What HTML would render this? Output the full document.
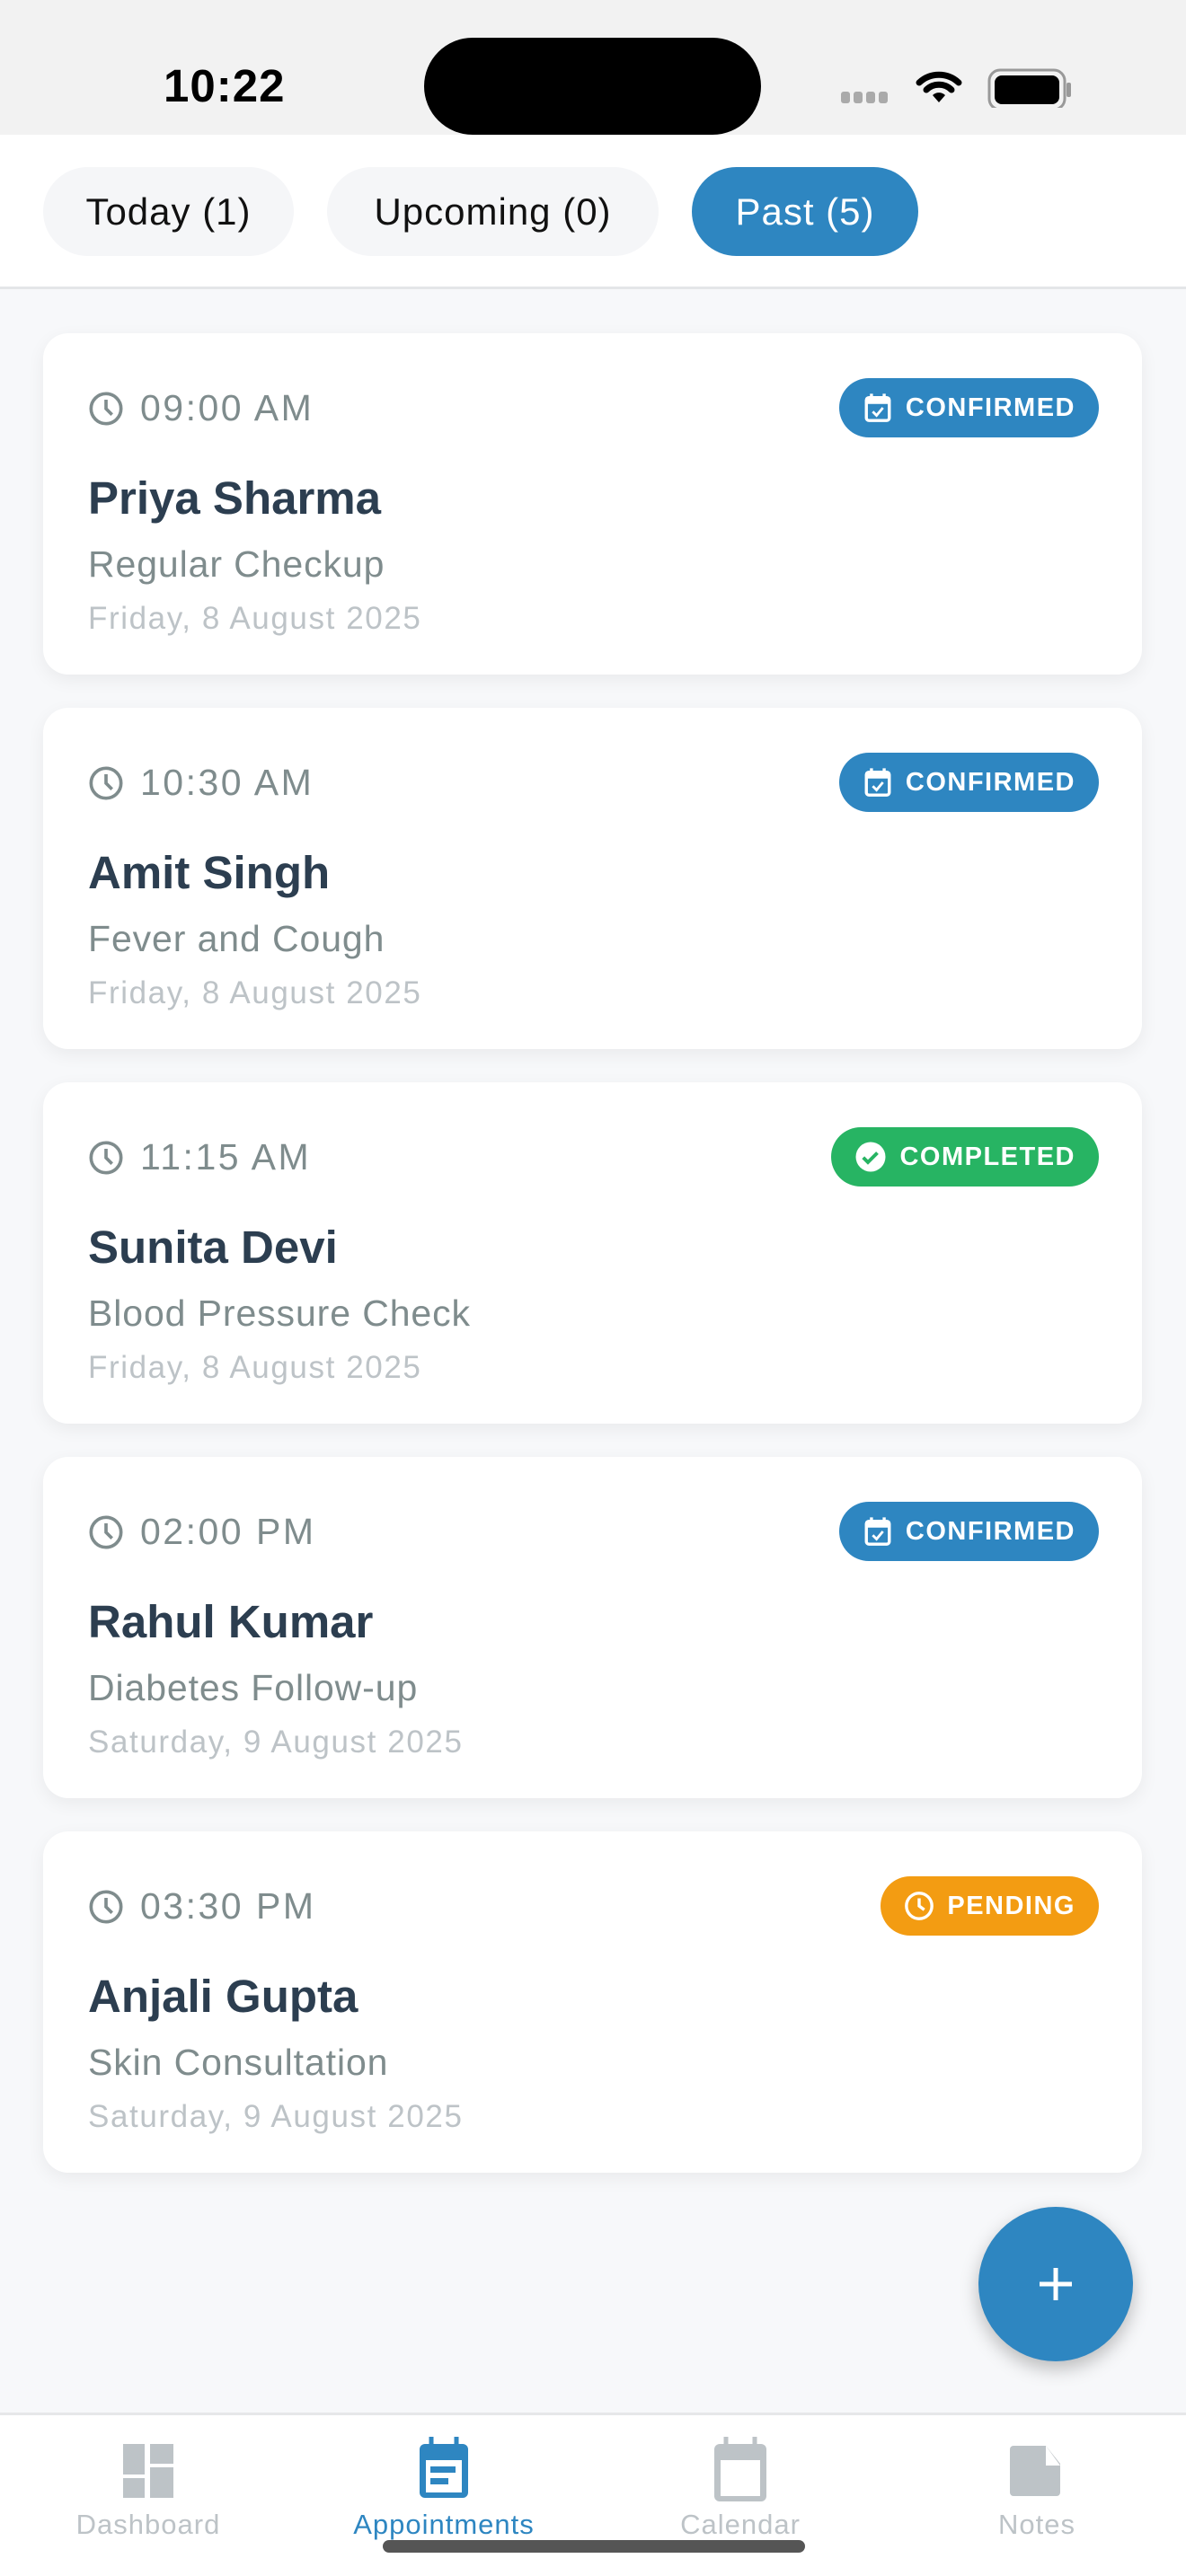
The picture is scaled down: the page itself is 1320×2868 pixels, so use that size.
<!DOCTYPE html>
<html><head><meta charset="utf-8"><style>
*{margin:0;padding:0;box-sizing:border-box}
body{width:1320px;height:2868px;background:#f7f8fa;font-family:"Liberation Sans",sans-serif;position:relative;overflow:hidden}
.sb{position:absolute;left:0;top:0;width:1320px;height:150px;background:#f2f2f2}
.time{position:absolute;left:182px;top:66px;font-size:51px;font-weight:700;color:#000;letter-spacing:1px}
.island{position:absolute;left:472px;top:42px;width:375px;height:108px;background:#000;border-radius:54px}
.tabs{position:absolute;left:0;top:150px;width:1320px;height:172px;background:#fff;border-bottom:3px solid #e4e6e8}
.tab{position:absolute;top:36px;height:99px;border-radius:50px;background:#f5f6f8;font-size:42px;letter-spacing:1px;color:#111;display:flex;align-items:center;justify-content:center}
.card{position:absolute;left:48px;width:1223px;height:380px;background:#fff;border-radius:28px;box-shadow:0 6px 20px rgba(0,0,0,.06)}
.tm{position:absolute;left:50px;top:60px;font-size:41px;letter-spacing:2.5px;color:#7f8c8d;display:flex;align-items:center}
.tm svg{margin-right:18px}
.badge{position:absolute;right:48px;top:50px;height:66px;border-radius:33px;color:#fff;font-weight:700;font-size:29px;letter-spacing:1.5px;display:flex;align-items:center;padding:0 26px 0 26px}
.badge svg{margin-right:14px}
.nm{position:absolute;left:50px;top:154px;font-size:51px;font-weight:700;color:#2c3e50}
.rs{position:absolute;left:50px;top:234px;font-size:41px;letter-spacing:0.9px;color:#7f8c8d}
.dt{position:absolute;left:50px;top:298px;font-size:35px;letter-spacing:1.6px;color:#bdc3c7}
.fab{position:absolute;left:1089px;top:2457px;width:172px;height:172px;border-radius:50%;background:#2e86c1;box-shadow:0 8px 20px rgba(0,0,0,.25)}
.nav{position:absolute;left:0;top:2686px;width:1320px;height:182px;background:#fff;border-top:3px solid #e6e7e9}
.ni{position:absolute;top:0;width:300px;text-align:center}
.ni span{position:absolute;left:0;right:0;top:104px;font-size:31px;letter-spacing:1px;color:#bdc3c7}
</style></head><body>
<div class="sb"><div class="time">10:22</div><div class="island"></div>
<svg style="position:absolute;left:935px;top:60px" width="330" height="60">
<g fill="#aaa"><rect x="1" y="42" width="10" height="13" rx="3"/><rect x="15" y="42" width="10" height="13" rx="3"/><rect x="29" y="42" width="10" height="13" rx="3"/><rect x="43" y="42" width="10" height="13" rx="3"/></g>
<path d="M88 32a32 32 0 0 1 44 0M96 40a20 20 0 0 1 28 0" stroke="#000" stroke-width="7" fill="none" stroke-linecap="round"/><path d="M103 46l7 8 7-8a10 10 0 0 0-14 0z" fill="#000"/>
<rect x="166" y="18" width="84" height="44" rx="12" fill="none" stroke="#999" stroke-width="3"/><rect x="172" y="24" width="72" height="32" rx="8" fill="#000"/><rect x="252" y="32" width="5" height="16" rx="2" fill="#999"/></svg>
</div>
<div class="tabs">
<div class="tab" style="left:48px;width:279px">Today (1)</div>
<div class="tab" style="left:364px;width:369px">Upcoming (0)</div>
<div class="tab" style="left:770px;width:252px;background:#2e86c1;color:#fff">Past (5)</div>
</div>

<div class="card" style="top:371px"><div class="tm"><svg width="40" height="40" viewBox="0 0 24 24"><circle cx="12" cy="12" r="10" fill="none" stroke="#7f8c8d" stroke-width="2.2"/><path d="M12 6v6l4 4" fill="none" stroke="#7f8c8d" stroke-width="2.2"/></svg>09:00 AM</div>
<div class="badge" style="background:#2e86c1"><svg width="34" height="34" viewBox="0 0 24 24"><path d="M7 1v4M17 1v4" stroke="#fff" stroke-width="2.4"/><rect x="3" y="4" width="18" height="18" rx="2" fill="none" stroke="#fff" stroke-width="2.4"/><rect x="3" y="4" width="18" height="5" fill="#fff"/><path d="M8 15l3 3 5-6" fill="none" stroke="#fff" stroke-width="2"/></svg>CONFIRMED</div>
<div class="nm">Priya Sharma</div><div class="rs">Regular Checkup</div><div class="dt">Friday, 8 August 2025</div></div>

<div class="card" style="top:788px"><div class="tm"><svg width="40" height="40" viewBox="0 0 24 24"><circle cx="12" cy="12" r="10" fill="none" stroke="#7f8c8d" stroke-width="2.2"/><path d="M12 6v6l4 4" fill="none" stroke="#7f8c8d" stroke-width="2.2"/></svg>10:30 AM</div>
<div class="badge" style="background:#2e86c1"><svg width="34" height="34" viewBox="0 0 24 24"><path d="M7 1v4M17 1v4" stroke="#fff" stroke-width="2.4"/><rect x="3" y="4" width="18" height="18" rx="2" fill="none" stroke="#fff" stroke-width="2.4"/><rect x="3" y="4" width="18" height="5" fill="#fff"/><path d="M8 15l3 3 5-6" fill="none" stroke="#fff" stroke-width="2"/></svg>CONFIRMED</div>
<div class="nm">Amit Singh</div><div class="rs">Fever and Cough</div><div class="dt">Friday, 8 August 2025</div></div>

<div class="card" style="top:1205px"><div class="tm"><svg width="40" height="40" viewBox="0 0 24 24"><circle cx="12" cy="12" r="10" fill="none" stroke="#7f8c8d" stroke-width="2.2"/><path d="M12 6v6l4 4" fill="none" stroke="#7f8c8d" stroke-width="2.2"/></svg>11:15 AM</div>
<div class="badge" style="background:#27b463"><svg width="36" height="36" viewBox="0 0 24 24"><circle cx="12" cy="12" r="11" fill="#fff"/><path d="M6.5 12.5l3.5 3.5 7-7" fill="none" stroke="#27b463" stroke-width="2.6"/></svg>COMPLETED</div>
<div class="nm">Sunita Devi</div><div class="rs">Blood Pressure Check</div><div class="dt">Friday, 8 August 2025</div></div>

<div class="card" style="top:1622px"><div class="tm"><svg width="40" height="40" viewBox="0 0 24 24"><circle cx="12" cy="12" r="10" fill="none" stroke="#7f8c8d" stroke-width="2.2"/><path d="M12 6v6l4 4" fill="none" stroke="#7f8c8d" stroke-width="2.2"/></svg>02:00 PM</div>
<div class="badge" style="background:#2e86c1"><svg width="34" height="34" viewBox="0 0 24 24"><path d="M7 1v4M17 1v4" stroke="#fff" stroke-width="2.4"/><rect x="3" y="4" width="18" height="18" rx="2" fill="none" stroke="#fff" stroke-width="2.4"/><rect x="3" y="4" width="18" height="5" fill="#fff"/><path d="M8 15l3 3 5-6" fill="none" stroke="#fff" stroke-width="2"/></svg>CONFIRMED</div>
<div class="nm">Rahul Kumar</div><div class="rs">Diabetes Follow-up</div><div class="dt">Saturday, 9 August 2025</div></div>

<div class="card" style="top:2039px"><div class="tm"><svg width="40" height="40" viewBox="0 0 24 24"><circle cx="12" cy="12" r="10" fill="none" stroke="#7f8c8d" stroke-width="2.2"/><path d="M12 6v6l4 4" fill="none" stroke="#7f8c8d" stroke-width="2.2"/></svg>03:30 PM</div>
<div class="badge" style="background:#f39c12"><svg width="34" height="34" viewBox="0 0 24 24"><circle cx="12" cy="12" r="10" fill="none" stroke="#fff" stroke-width="2.4"/><path d="M12 6v6l4 3" fill="none" stroke="#fff" stroke-width="2.4"/></svg>PENDING</div>
<div class="nm">Anjali Gupta</div><div class="rs">Skin Consultation</div><div class="dt">Saturday, 9 August 2025</div></div>

<div class="fab"><svg width="172" height="172"><path d="M86 68v36M68 86h36" stroke="#fff" stroke-width="5"/></svg></div>

<div class="nav">
<div class="ni" style="left:15px"><svg style="margin-top:30px" width="60" height="64" viewBox="0 0 60 64"><g fill="#bdc3c7"><rect x="2" y="2" width="24" height="34"/><rect x="32" y="2" width="26" height="22"/><rect x="2" y="40" width="24" height="22"/><rect x="32" y="28" width="26" height="34"/></g></svg><span>Dashboard</span></div>
<div class="ni" style="left:344px"><svg style="margin-top:24px" width="60" height="70" viewBox="0 0 60 70"><path d="M16 0v12M44 0v12" stroke="#2e86c1" stroke-width="5"/><rect x="3" y="8" width="54" height="60" rx="6" fill="#2e86c1"/><rect x="10" y="26" width="40" height="36" fill="#fff"/><rect x="15" y="33" width="28" height="7" fill="#2e86c1"/><rect x="15" y="46" width="20" height="7" fill="#2e86c1"/></svg><span style="color:#2e86c1">Appointments</span></div>
<div class="ni" style="left:674px"><svg style="margin-top:24px" width="64" height="74" viewBox="0 0 64 74"><path d="M16 0v12M48 0v12" stroke="#bdc3c7" stroke-width="5"/><rect x="3" y="8" width="58" height="64" rx="6" fill="#bdc3c7"/><rect x="10" y="26" width="44" height="40" fill="#fff"/></svg><span>Calendar</span></div>
<div class="ni" style="left:1004px"><svg style="margin-top:34px" width="64" height="56" viewBox="0 0 64 56"><path d="M6 0h36l16 20v32a4 4 0 0 1-4 4H6a4 4 0 0 1-4-4V4a4 4 0 0 1 4-4z" fill="#bdc3c7"/><path d="M42 0v22h16" fill="#fff"/></svg><span>Notes</span></div>
</div>
<div style="position:absolute;left:426px;top:2828px;width:470px;height:14px;border-radius:7px;background:#555"></div>
</body></html>
